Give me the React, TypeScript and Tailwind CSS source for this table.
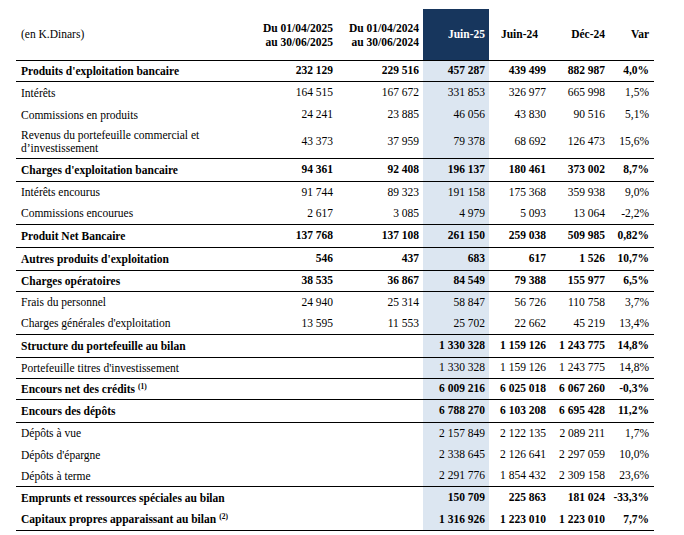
type Row = {
	label: string;
	sup?: string;
	values: string[];
	bold?: boolean;
	line?: boolean;
	h: string;
};

const ROWS: Row[] = [
	{ label: "Produits d'exploitation bancaire", values: ['232 129', '229 516', '457 287', '439 499', '882 987', '4,0%'], bold: true, line: true, h: 'h-[21px]' },
	{ label: 'Intérêts', values: ['164 515', '167 672', '331 853', '326 977', '665 998', '1,5%'], h: 'h-[22px]' },
	{ label: 'Commissions en produits', values: ['24 241', '23 885', '46 056', '43 830', '90 516', '5,1%'], h: 'h-[22px]' },
	{ label: 'Revenus du portefeuille commercial et\nd\u2019investissement', values: ['43 373', '37 959', '79 378', '68 692', '126 473', '15,6%'], line: true, h: 'h-[33px]' },
	{ label: "Charges d'exploitation bancaire", values: ['94 361', '92 408', '196 137', '180 461', '373 002', '8,7%'], bold: true, line: true, h: 'h-[23px]' },
	{ label: 'Intérêts encourus', values: ['91 744', '89 323', '191 158', '175 368', '359 938', '9,0%'], h: 'h-[21px]' },
	{ label: 'Commissions encourues', values: ['2 617', '3 085', '4 979', '5 093', '13 064', '-2,2%'], line: true, h: 'h-[22px]' },
	{ label: 'Produit Net Bancaire', values: ['137 768', '137 108', '261 150', '259 038', '509 985', '0,82%'], bold: true, line: true, h: 'h-[23px]' },
	{ label: "Autres produits d'exploitation", values: ['546', '437', '683', '617', '1 526', '10,7%'], bold: true, line: true, h: 'h-[23px]' },
	{ label: 'Charges opératoires', values: ['38 535', '36 867', '84 549', '79 388', '155 977', '6,5%'], bold: true, line: true, h: 'h-[21px]' },
	{ label: 'Frais du personnel', values: ['24 940', '25 314', '58 847', '56 726', '110 758', '3,7%'], h: 'h-[21px]' },
	{ label: "Charges générales d'exploitation", values: ['13 595', '11 553', '25 702', '22 662', '45 219', '13,4%'], line: true, h: 'h-[22px]' },
	{ label: 'Structure du portefeuille au bilan', values: ['', '', '1 330 328', '1 159 126', '1 243 775', '14,8%'], bold: true, line: true, h: 'h-[23px]' },
	{ label: "Portefeuille titres d'investissement", values: ['', '', '1 330 328', '1 159 126', '1 243 775', '14,8%'], line: true, h: 'h-[21px]' },
	{ label: 'Encours net des crédits', sup: '(1)', values: ['', '', '6 009 216', '6 025 018', '6 067 260', '-0,3%'], bold: true, line: true, h: 'h-[21px]' },
	{ label: 'Encours des dépôts', values: ['', '', '6 788 270', '6 103 208', '6 695 428', '11,2%'], bold: true, line: true, h: 'h-[23px]' },
	{ label: 'Dépôts à vue', values: ['', '', '2 157 849', '2 122 135', '2 089 211', '1,7%'], h: 'h-[21px]' },
	{ label: "Dépôts d'épargne", values: ['', '', '2 338 645', '2 126 641', '2 297 059', '10,0%'], h: 'h-[22px]' },
	{ label: 'Dépôts à terme', values: ['', '', '2 291 776', '1 854 432', '2 309 158', '23,6%'], line: true, h: 'h-[21px]' },
	{ label: 'Emprunts et ressources spéciales au bilan', values: ['', '', '150 709', '225 863', '181 024', '-33,3%'], bold: true, h: 'h-[22px]' },
	{ label: 'Capitaux propres apparaissant au bilan', sup: '(2)', values: ['', '', '1 316 926', '1 223 010', '1 223 010', '7,7%'], bold: true, line: true, h: 'h-[22px]' },
];

const GRID = 'grid w-[638px] grid-cols-[235px_86px_86px_66px_61px_59px_45px]';

function TableRow({ row }: { row: Row }) {
	return (
		<div
			className={`${GRID} ${row.h} ${row.line ? 'border-b border-black' : ''} ${row.bold ? 'font-bold' : ''}`}
		>
			<div className="flex items-center whitespace-pre-line pl-[5px] leading-[13px]">
				<span>
					{row.label}
					{row.sup ? <sup className="ml-[3px] text-[7.5px]">{row.sup}</sup> : null}
				</span>
			</div>
			{row.values.map((value, i) => (
				<div
					className={`flex items-center justify-end ${i === 2 ? 'bg-[#dce6f1]' : ''} ${i === 5 ? 'pr-[5px]' : 'pr-[4px]'}`}
					key={i}
				>
					{value}
				</div>
			))}
		</div>
	);
}

export default function App() {
	return (
		<div className="h-[535px] w-[684px] bg-white pt-[9px] pl-[16px] font-['Liberation_Serif',serif] text-[11.5px] text-black">
			<div className={`${GRID} h-[52px] border-b border-black`}>
				<div className="flex items-center pl-[5px]">(en K.Dinars)</div>
				<div className="flex flex-col items-end justify-center pr-[4px] font-bold leading-[14px]">
					<span>Du 01/04/2025</span>
					<span>au 30/06/2025</span>
				</div>
				<div className="flex flex-col items-end justify-center pr-[4px] font-bold leading-[14px]">
					<span>Du 01/04/2024</span>
					<span>au 30/06/2024</span>
				</div>
				<div className="flex items-center justify-end bg-[#17365d] pr-[4px] font-bold text-white">
					Juin-25
				</div>
				<div className="flex items-center justify-center font-bold">Juin-24</div>
				<div className="flex items-center justify-end pr-[4px] font-bold">Déc-24</div>
				<div className="flex items-center justify-end pr-[5px] font-bold">Var</div>
			</div>
			{ROWS.map((row) => (
				<TableRow key={row.label} row={row} />
			))}
		</div>
	);
}
